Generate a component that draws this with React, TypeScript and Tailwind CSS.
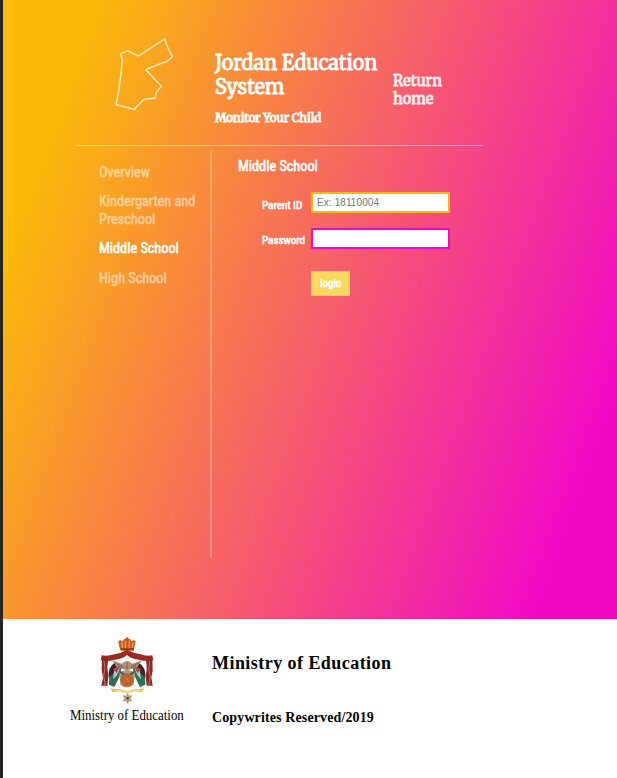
import React from "react";

const serif = "font-['Merriweather','DejaVu_Serif_Condensed',serif] font-normal [-webkit-text-stroke:0.85px_currentColor] origin-left whitespace-nowrap";
const sans = "font-['Roboto_Condensed','Roboto',sans-serif] font-normal [-webkit-text-stroke:0.6px_currentColor] origin-left scale-x-[0.95] whitespace-nowrap";
const times = "font-['Liberation_Serif',serif] whitespace-nowrap";

function CountryOutline() {
  return (
    <svg className="ml-[97px] mt-[30px] h-[90px] w-[90px] shrink-0" viewBox="0 0 270 270" fill="none">
      <path
        d="M61 72 L82 62 L115 78 L194 27 L204 54 L217 80 L200 95 L182 101 L137 118 L184 169 L168 188 L166 204 L132 208 L103 238 L48 224 L55 190 L62 140 L67 87 Z"
        stroke="#fff3d6"
        strokeWidth="4"
        strokeLinejoin="round"
      />
    </svg>
  );
}

function Emblem() {
  return (
    <svg className="block h-[68px] w-[54px]" viewBox="0 0 162 204">
      {/* crown */}
      <path d="M57 26 L55 13 Q61 7 67 13 Q72 4 81 3 Q91 4 95 13 Q102 7 107 13 L104 27 L101 41 H62 Z" fill="#c85a22" />
      <path d="M65 15 L68 36 M75 11 L76 36 M88 11 L87 36 M99 15 L96 36" stroke="#f0b64c" strokeWidth="3" />
      <path d="M62 36 H102" stroke="#8e2417" strokeWidth="4" />
      <path d="M81 0 V8" stroke="#a64b26" strokeWidth="3" />
      {/* mantle */}
      <path d="M5 55 Q23 59 43 52 Q62 49 81 38 Q102 49 122 52 Q139 59 157 55 L160 70 Q137 75 117 68 Q96 67 81 54 Q66 67 44 68 Q24 75 2 70 Z" fill="#9e2b22" />
      <path d="M6 61 H25 L22 90 L25 119 L22 146 H4 L9 122 L5 100 Z M138 61 H157 L158 101 L154 122 L158 146 H140 L137 121 L140 96 Z" fill="#8f2621" />
      <path d="M12 72 L15 94 L11 116 L16 145 M149 72 L146 98 L151 116 L146 145" stroke="#c08474" strokeWidth="2.5" fill="none" />
      <path d="M4 145 H23 M140 145 H158" stroke="#b5705a" strokeWidth="3" />
      {/* flags */}
      <path d="M45 82 Q25 96 27 143 L43 150 L59 118 L64 94 Z" fill="#356b58" />
      <path d="M116 82 Q137 96 136 143 L120 150 L104 118 L98 94 Z" fill="#277455" />
      <path d="M43 78 Q24 90 26 121 L38 111 L61 89 Z M117 78 Q138 90 136 121 L124 111 L102 89 Z" fill="#33242f" />
      <path d="M42 102 L60 93 L51 115 L39 127 Z M120 102 L103 93 L112 115 L123 127 Z" fill="#b9c4b5" />
      <path d="M38 96 L60 86 L50 108 Z M124 96 L102 86 L112 108 Z" fill="#bc4353" />
      {/* eagle and shield */}
      <path d="M36 70 L65 80 L73 74 L81 71 L89 74 L97 80 L126 70 L112 90 L94 95 L81 102 L68 95 L50 90 Z" fill="#b39072" />
      <path d="M44 78 L68 88 M118 78 L94 88 M54 88 L70 93 M108 88 L92 93 M81 77 V97" stroke="#6f5c4c" strokeWidth="2.5" />
      <path d="M58 104 Q81 95 105 104 L101 143 Q81 160 61 143 Z" fill="#a89a78" />
      <circle cx="81" cy="128" r="20" fill="#be602b" />
      <path d="M71 117 L91 138 M71 138 L91 117" stroke="#cf7b40" strokeWidth="3" />
      <path d="M60 104 L72 113 M91 113 L103 104" stroke="#39466d" strokeWidth="5" />
      {/* ribbon and star */}
      <path d="M31 154 Q46 156 58 156 Q81 166 105 156 Q119 156 134 154 L126 165 L105 163 Q81 172 59 163 L38 166 Z" fill="#dfc45c" />
      <path d="M49 161 Q58 158 68 163 Q81 166 95 163 Q108 158 117 161" stroke="#f5e29a" strokeWidth="3" fill="none" />
      <path d="M83 170 L86 178 L95 176 L90 184 L95 192 L86 190 L83 199 L79 190 L70 192 L75 184 L70 176 L79 178 Z" fill="#d3b48a" stroke="#8d6b52" strokeWidth="2" />
      <circle cx="83" cy="184" r="4" fill="#5b3b37" />
    </svg>
  );
}

export default function App() {
  return (
    <div className="flex h-[778px] w-[617px] overflow-hidden bg-white">
      <div className="w-[3px] shrink-0 bg-[#252525]" />
      <div className="flex w-[614px] flex-col">
        <main className="flex h-[619px] flex-col bg-[linear-gradient(110deg,#fbb90a_11.5%,#f009c5_90%)] text-white">
          <header className="flex h-[145px] shrink-0">
            <CountryOutline />
            <div className="ml-[25px] mt-[51px] w-[178px]">
              <h1 className={`${serif} text-[20px] leading-[24px] scale-x-[0.985]`}>Jordan Education<br />System</h1>
              <h2 className={`${serif} mt-[10px] text-[12px] leading-[18px] scale-x-[0.965]`}>Monitor Your Child</h2>
            </div>
            <a className={`${serif} mt-[72px] block h-9 text-[15px] leading-[18px] opacity-90 scale-x-[0.975]`}>Return<br />home</a>
          </header>
          <div className="ml-[72px] h-px w-[407px] shrink-0 bg-white/60" />
          <div className="ml-[72px] mt-[5px] flex h-[407px]">
            <nav className="w-[137px] border-r-2 border-white/25 pl-6 pt-3 text-[15px] leading-[18px]">
              <div className={`${sans} opacity-50`}>Overview</div>
              <div className={`${sans} mt-[11px] opacity-50`}>Kindergarten and<br />Preschool</div>
              <div className={`${sans} mt-[11px]`}>Middle School</div>
              <div className={`${sans} mt-3 opacity-50`}>High School</div>
            </nav>
            <form className="ml-[26px] mt-[6px] w-[213px]">
              <h3 className={`${sans} text-[15px] leading-[18px]`}>Middle School</h3>
              <div className="mt-[17px] flex h-[22px]">
                <label className={`${sans} ml-6 mt-[5px] w-[49px] text-[11.7px] leading-4`}>Parent ID</label>
                <input className="h-[21px] w-[139px] border-2 border-[#fdb90a] bg-white px-1 font-['Liberation_Sans',sans-serif] text-[10px] tracking-[0.1px] placeholder:text-[#757575]" placeholder="Ex: 18110004" />
              </div>
              <div className="mt-[14px] flex h-[22px]">
                <label className={`${sans} ml-6 mt-[4px] w-[49px] text-[11.7px] leading-4`}>Password</label>
                <input type="password" className="h-[21px] w-[139px] border-2 border-[#f00ac6] bg-white px-1" />
              </div>
              <button type="button" className="ml-[73px] mt-[21px] flex h-[25px] w-[39px] items-center border border-[#fbcb57] bg-[#fbd85f] pl-2">
                <span className={`${sans} text-[11.5px]`}>login</span>
              </button>
            </form>
          </div>
        </main>
        <footer className="flex h-[159px] text-black">
          <div className="ml-[67px] mt-[18px] w-[116px]">
            <div className="pl-[30px]"><Emblem /></div>
            <div className={`${times} mt-[2px] origin-left scale-x-[0.92] text-[14px] leading-[18px]`}>Ministry of Education</div>
          </div>
          <div className="ml-[26px] pt-[33px]">
            <div className={`${times} text-[18px] font-bold leading-[22px] tracking-[0.45px]`}>Ministry of Education</div>
            <div className={`${times} mt-[35px] text-[14px] font-bold leading-[18px] tracking-[0.12px]`}>Copywrites Reserved/2019</div>
          </div>
        </footer>
      </div>
    </div>
  );
}
